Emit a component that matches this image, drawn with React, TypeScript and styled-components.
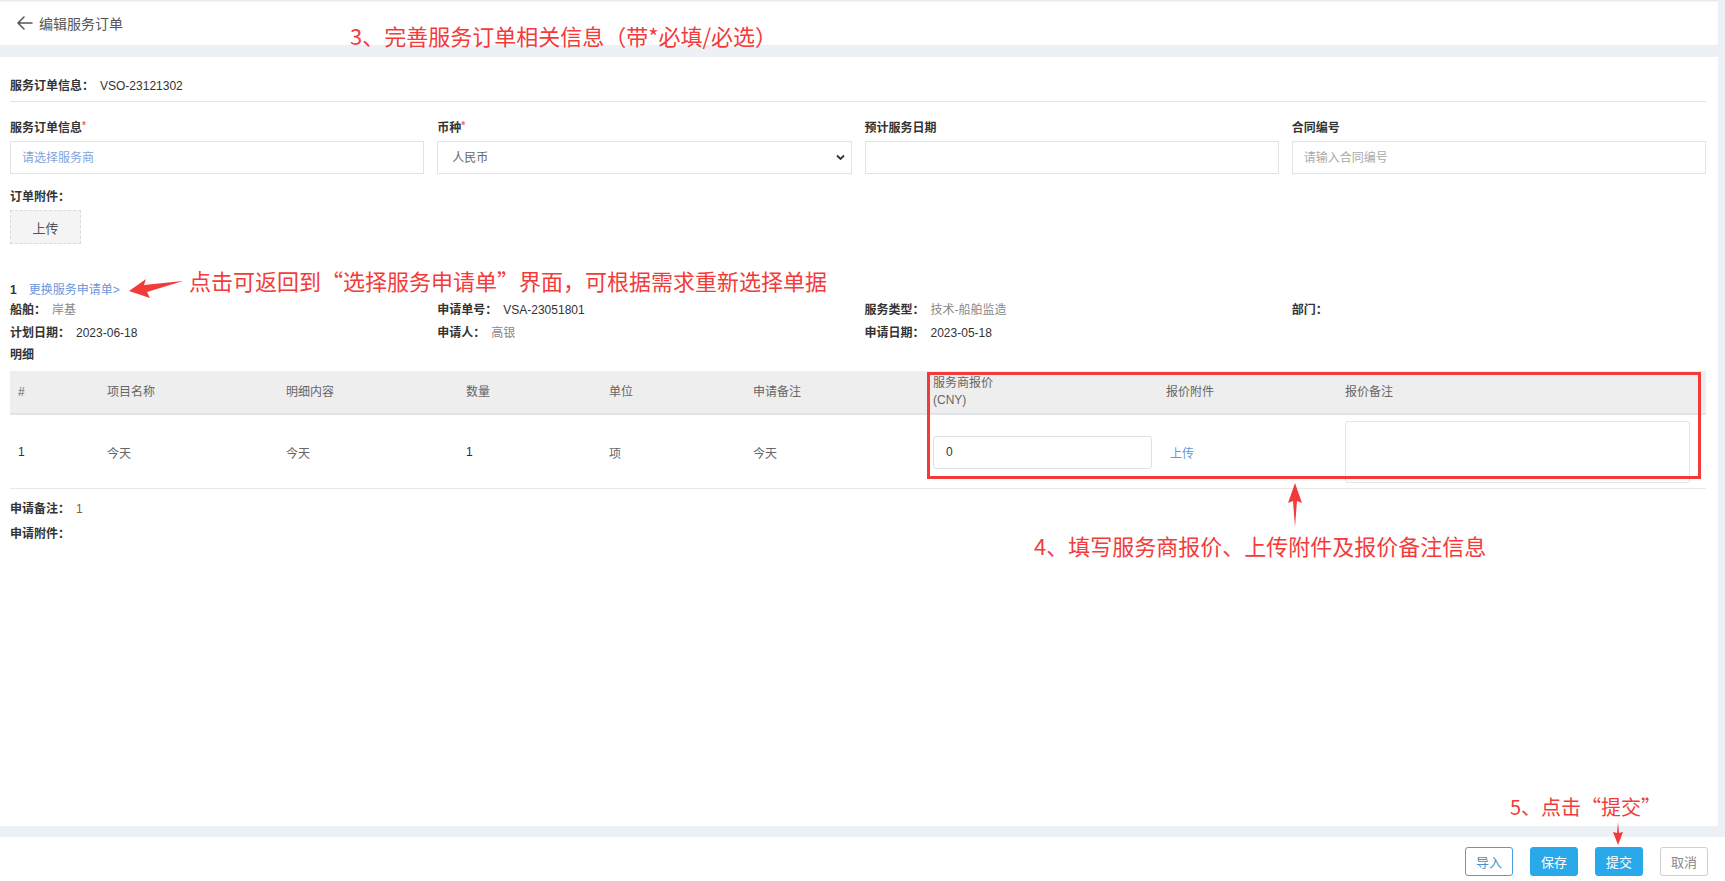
import React from "react";
import styled, { createGlobalStyle } from "styled-components";

const GlobalStyle = createGlobalStyle`
  html, body { margin: 0; padding: 0; }
  body {
    background: #edf0f4;
    font-family: "Liberation Sans", "Noto Sans CJK SC", sans-serif;
    font-size: 12px;
    color: #333;
  }
  * { box-sizing: border-box; }
`;

const Page = styled.div`
  position: relative;
  width: 1725px;
  height: 881px;
  display: flex;
  flex-direction: column;
  overflow: hidden;
`;

const TopBar = styled.header`
  height: 45px;
  margin-right: 7px;
  background: #fff;
  box-shadow: inset 0 2px 2px -1px rgba(0, 0, 0, 0.12);
  display: flex;
  align-items: center;
  gap: 5px;
  padding-left: 16px;
  font-family: "Noto Sans CJK SC", sans-serif;
  font-size: 14px;
  color: #555;
`;

const Main = styled.main`
  flex: 1;
  margin-top: 12px;
  margin-right: 7px;
  background: #fff;
  padding: 20px 12px 0 10px;
`;

const MetaLine = styled.div`
  line-height: 18px;
  padding-bottom: 6px;
  border-bottom: 1px solid #e4e4e4;
`;

const Label = styled.span`
  font-weight: 700;
  color: #333;
  font-family: "Liberation Sans", "Noto Sans CJK SC", sans-serif;
`;

const Value = styled.span<{ $color?: string }>`
  color: ${(p) => p.$color || "#333"};
  margin-left: 6px;
`;

const Req = styled.sup`
  color: #e86a6a;
  font-size: 10px;
  vertical-align: top;
  position: relative;
  top: -2px;
`;

const FieldGrid = styled.div`
  display: grid;
  grid-template-columns: repeat(4, 1fr);
  column-gap: 13px;
  margin-top: 17px;
`;

const Field = styled.div`
  display: flex;
  flex-direction: column;
  gap: 4px;
  line-height: 18px;
`;

const TextInput = styled.input<{ $ph?: string }>`
  height: 33px;
  width: 100%;
  border: 1px solid #e3e3e3;
  padding: 0 11px;
  font-family: "Liberation Sans", "Noto Sans CJK SC", sans-serif;
  font-size: 12px;
  color: #333;
  outline: none;
  background: #fff;
  &::placeholder {
    color: ${(p) => p.$ph || "#aaa"};
  }
`;

const SelectWrap = styled.div`
  position: relative;
  height: 33px;
`;

const Select = styled.select`
  appearance: none;
  width: 100%;
  height: 33px;
  border: 1px solid #e3e3e3;
  padding: 0 14px;
  font-family: "Liberation Sans", "Noto Sans CJK SC", sans-serif;
  font-size: 12px;
  color: #666;
  background: #fff;
  outline: none;
`;

const Chevron = styled.svg`
  position: absolute;
  right: 7px;
  top: 13px;
  pointer-events: none;
`;

const Block = styled.div<{ $mt: number }>`
  margin-top: ${(p) => p.$mt}px;
  line-height: 18px;
`;

const UploadBox = styled.div`
  margin-top: 4px;
  width: 71px;
  height: 34px;
  background: #f4f4f4;
  border: 1px dashed #dcdcdc;
  display: flex;
  align-items: center;
  justify-content: center;
  color: #555;
  font-size: 13px;
  font-family: "Noto Sans CJK SC", sans-serif;
`;

const RequestLine = styled.div`
  margin-top: 37px;
  display: flex;
  gap: 12px;
  line-height: 18px;
  font-weight: 700;
`;

const LinkText = styled.span`
  color: #6897dc;
  font-weight: 400;
`;

const InfoGrid = styled.div`
  display: grid;
  grid-template-columns: repeat(4, 1fr);
  column-gap: 13px;
  row-gap: 5px;
  margin-top: 2px;
  line-height: 18px;
`;

const TableWrap = styled.div`
  position: relative;
  margin-top: 7px;
`;

const Table = styled.table`
  width: 100%;
  border-collapse: collapse;
  table-layout: fixed;
`;

const Th = styled.th`
  background: #eeeeee;
  height: 43px;
  text-align: left;
  padding: 0 8px;
  font-weight: 400;
  color: #666;
  line-height: 17px;
  border-bottom: 2px solid #e0e4e9;
`;

const Td = styled.td<{ $color?: string }>`
  height: 73px;
  padding: 6px 8px 5px;
  vertical-align: middle;
  color: ${(p) => p.$color || "#666"};
  border-bottom: 1px solid #e8e8e8;
`;

const PriceInput = styled.input`
  width: 219px;
  height: 33px;
  border: 1px solid #e0e0e0;
  border-radius: 3px;
  padding: 0 12px;
  font-family: "Liberation Sans", sans-serif;
  font-size: 12px;
  color: #333;
  outline: none;
`;

const NoteArea = styled.textarea`
  display: block;
  width: 345px;
  height: 62px;
  border: 1px solid #e5e5e5;
  border-radius: 3px;
  resize: none;
  outline: none;
`;

const TableLink = styled.span`
  color: #5b9bdf;
  margin-left: 4px;
`;

const Highlight = styled.div`
  position: absolute;
  left: 917px;
  top: 1px;
  width: 774px;
  height: 107px;
  border: 3px solid #f23a3a;
  pointer-events: none;
`;

const Footer = styled.footer`
  margin-top: 11px;
  height: 44px;
  background: #fff;
  display: flex;
  justify-content: flex-end;
  align-items: flex-start;
  gap: 17px;
  padding: 10px 17px 0 0;
`;

const Btn = styled.button<{ $kind: "outline" | "primary" | "plain" }>`
  width: 48px;
  height: 29px;
  border-radius: 3px;
  font-family: "Noto Sans CJK SC", sans-serif;
  font-size: 13px;
  padding: 0;
  cursor: pointer;
  border: 1px solid
    ${(p) => (p.$kind === "outline" ? "#4a9fe0" : p.$kind === "primary" ? "#29a8ea" : "#cfcfcf")};
  background: ${(p) => (p.$kind === "primary" ? "#29a8ea" : "#fff")};
  color: ${(p) => (p.$kind === "primary" ? "#fff" : p.$kind === "outline" ? "#4a8fcb" : "#888")};
`;

const Note = styled.div<{ $x: number; $y: number; $size: number }>`
  position: absolute;
  left: ${(p) => p.$x}px;
  top: ${(p) => p.$y}px;
  font-family: "Noto Sans CJK SC", sans-serif;
  font-size: ${(p) => p.$size}px;
  line-height: 1;
  color: #f33b3b;
  white-space: nowrap;
  pointer-events: none;
`;

const Overlay = styled.svg`
  position: absolute;
  left: 0;
  top: 0;
  pointer-events: none;
`;

const cols = [89, 179, 180, 143, 144, 180, 233, 179, 369];

export default function App() {
  return (
    <>
      <GlobalStyle />
      <Page>
        <TopBar>
          <svg width="18" height="16" viewBox="0 0 18 16">
            <path d="M16 8H2M8 2L2 8l6 6" fill="none" stroke="#555" strokeWidth="1.5" strokeLinecap="round" strokeLinejoin="round" />
          </svg>
          <span>编辑服务订单</span>
        </TopBar>

        <Main>
          <MetaLine>
            <Label>服务订单信息：</Label>
            <Value>VSO-23121302</Value>
          </MetaLine>

          <FieldGrid>
            <Field>
              <Label>
                服务订单信息<Req>*</Req>
              </Label>
              <TextInput placeholder="请选择服务商" $ph="#7fa3db" />
            </Field>
            <Field>
              <Label>
                币种<Req>*</Req>
              </Label>
              <SelectWrap>
                <Select defaultValue="rmb">
                  <option value="rmb">人民币</option>
                </Select>
                <Chevron width="9" height="7" viewBox="0 0 9 7">
                  <path d="M1 1.5l3.5 3.5L8 1.5" fill="none" stroke="#333" strokeWidth="1.8" />
                </Chevron>
              </SelectWrap>
            </Field>
            <Field>
              <Label>预计服务日期</Label>
              <TextInput />
            </Field>
            <Field>
              <Label>合同编号</Label>
              <TextInput placeholder="请输入合同编号" $ph="#aaa" />
            </Field>
          </FieldGrid>

          <Block $mt={14}>
            <Label>订单附件：</Label>
          </Block>
          <UploadBox>上传</UploadBox>

          <RequestLine>
            <span>1</span>
            <LinkText>更换服务申请单&gt;</LinkText>
          </RequestLine>

          <InfoGrid>
            <div>
              <Label>船舶：</Label>
              <Value $color="#888">岸基</Value>
            </div>
            <div>
              <Label>申请单号：</Label>
              <Value>VSA-23051801</Value>
            </div>
            <div>
              <Label>服务类型：</Label>
              <Value $color="#888">技术-船舶监造</Value>
            </div>
            <div>
              <Label>部门：</Label>
            </div>
            <div>
              <Label>计划日期：</Label>
              <Value>2023-06-18</Value>
            </div>
            <div>
              <Label>申请人：</Label>
              <Value $color="#888">高银</Value>
            </div>
            <div>
              <Label>申请日期：</Label>
              <Value>2023-05-18</Value>
            </div>
            <div />
          </InfoGrid>

          <Block $mt={4}>
            <Label>明细</Label>
          </Block>

          <TableWrap>
            <Table>
              <colgroup>
                {cols.map((w, i) => (
                  <col key={i} style={{ width: w }} />
                ))}
              </colgroup>
              <thead>
                <tr>
                  <Th>#</Th>
                  <Th>项目名称</Th>
                  <Th>明细内容</Th>
                  <Th>数量</Th>
                  <Th>单位</Th>
                  <Th>申请备注</Th>
                  <Th>
                    服务商报价
                    <br />
                    (CNY)
                  </Th>
                  <Th>报价附件</Th>
                  <Th>报价备注</Th>
                </tr>
              </thead>
              <tbody>
                <tr>
                  <Td $color="#333">1</Td>
                  <Td>今天</Td>
                  <Td>今天</Td>
                  <Td $color="#1c2a63">1</Td>
                  <Td>项</Td>
                  <Td>今天</Td>
                  <Td>
                    <PriceInput defaultValue="0" />
                  </Td>
                  <Td>
                    <TableLink>上传</TableLink>
                  </Td>
                  <Td>
                    <NoteArea />
                  </Td>
                </tr>
              </tbody>
            </Table>
            <Highlight />
          </TableWrap>

          <Block $mt={11}>
            <Label>申请备注：</Label>
            <Value $color="#8a5a36">1</Value>
          </Block>
          <Block $mt={7}>
            <Label>申请附件：</Label>
          </Block>
        </Main>

        <Footer>
          <Btn $kind="outline">导入</Btn>
          <Btn $kind="primary">保存</Btn>
          <Btn $kind="primary">提交</Btn>
          <Btn $kind="plain">取消</Btn>
        </Footer>

        <Note $x={350} $y={24} $size={22}>
          3、完善服务订单相关信息（带*必填/必选）
        </Note>
        <Note $x={189} $y={269} $size={22}>
          点击可返回到“选择服务申请单”界面，可根据需求重新选择单据
        </Note>
        <Note $x={1034} $y={534} $size={22}>
          4、填写服务商报价、上传附件及报价备注信息
        </Note>
        <Note $x={1510} $y={797} $size={20}>
          5、点击“提交”
        </Note>

        <Overlay width="1725" height="881" viewBox="0 0 1725 881">
          <polygon points="129,291 146,279 144,285 183,281 147,292 150,298" fill="#f23a3a" />
          <polygon points="1295,483 1302,503 1297,501 1295,527 1293,501 1288,503" fill="#f23a3a" />
          <polygon points="1618,845 1613,832 1617,833 1618,822 1619,833 1623,832" fill="#f23a3a" />
        </Overlay>
      </Page>
    </>
  );
}
